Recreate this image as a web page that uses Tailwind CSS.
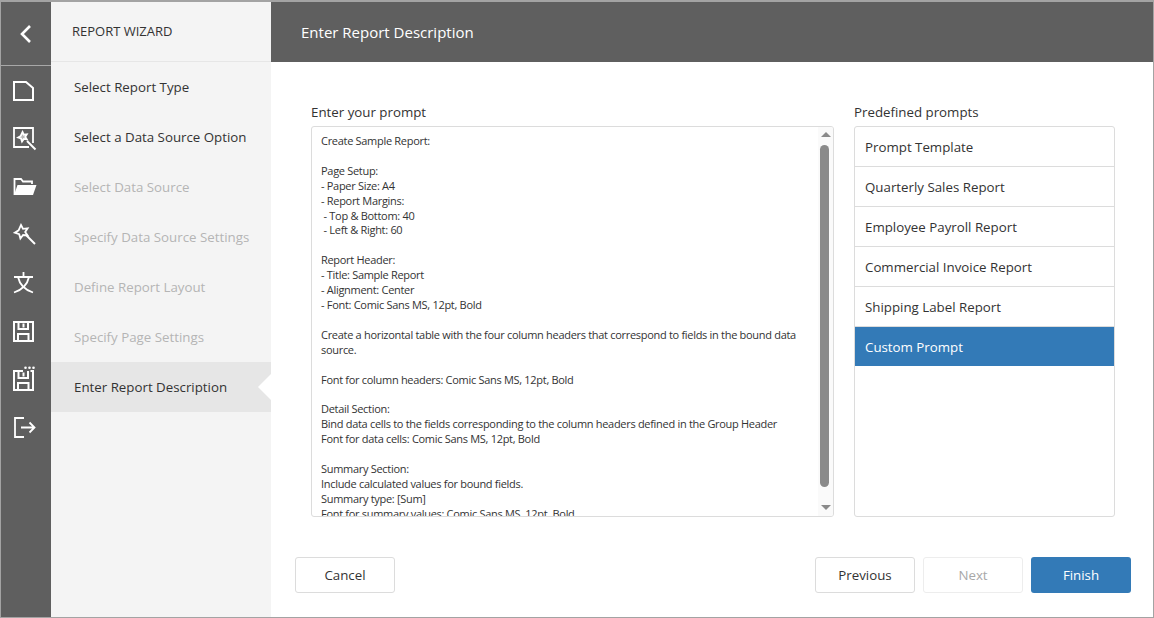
<!DOCTYPE html>
<html lang="en">

<head>
    <title>Report Wizard</title>
    <meta charset="UTF-8">
    <meta name="viewport" content="width=device-width, initial-scale=1.0">
    <script src="https://cdn.jsdelivr.net/npm/@tailwindcss/browser@4"></script>
</head>

<body class="bg-white font-['Open_Sans','Noto_Sans',sans-serif] text-[#333]">
    <div class="flex h-[618px] w-[1154px] overflow-hidden border border-t-2 border-[#a3a3a3] bg-white">
        <!-- icon bar -->
        <nav class="flex w-[50px] flex-none flex-col bg-[#5f5f5f] text-white">
            <div class="flex h-[64px] flex-none items-center justify-center border-b border-[#a8a8a8]">
                <svg width="14" height="20" viewBox="0 0 14 20" fill="none" stroke="white" stroke-width="2.6"><path d="M11 2 3 10l8 8" /></svg>
            </div>
            <div class="flex flex-col pt-[1px]">
                <div class="flex h-[48px] items-center pl-[12px]">
                    <svg width="21" height="20" viewBox="0 0 21 20" fill="none" stroke="white" stroke-width="2"><path d="M1 1h12l7 6v12H1z" /></svg>
                </div>
                <div class="flex h-[48px] items-center pl-[12px]">
                    <svg width="24" height="24" viewBox="0 0 24 24" fill="none" stroke="white" stroke-width="1.800"><path d="M16 20H1V1h19v15" /><path d="m9.500 5 1.300 2.700 3-.3-1.500 2.500 1.500 2.400-3-.4-1.800 2.600-1-3-2.900-1 2.600-1.600z" fill="white" fill-opacity=".55" /><path d="m14 14 8.500 8.500" stroke-width="2" /></svg>
                </div>
                <div class="flex h-[48px] items-center pl-[12px]">
                    <svg width="24" height="18" viewBox="0 0 24 18" fill="none" stroke="white" stroke-width="1.800"><path d="M1.500 17V1h6.500l2 2.500h9V6" /><path d="M4.500 7H23.500L20 17H1z" fill="white" stroke="none" /></svg>
                </div>
                <div class="flex h-[48px] items-center pl-[12px]">
                    <svg width="24" height="24" viewBox="0 0 24 24" fill="none" stroke="white" stroke-width="1.800"><path d="m8 2 2 3.800 4.600-.5-2.400 3.700 2.400 3.500-4.500-.5-2.700 3.500-1.200-4.300-4.400-1.500 3.800-2.400z" /><path d="m13 12 9 9" stroke-width="2" /></svg>
                </div>
                <div class="flex h-[48px] items-center pl-[12px]">
                    <svg width="22" height="22" viewBox="0 0 22 22" fill="none" stroke="white" stroke-width="1.800"><path d="M1 5h19M10.500 0v5M5 5c1.500 7 6 12.500 15 15.500M16 5C14.500 12 10 17.500 1 20.500" /></svg>
                </div>
                <div class="flex h-[48px] items-center pl-[12px]">
                    <svg width="21" height="21" viewBox="0 0 21 21" fill="none" stroke="white" stroke-width="2"><path d="M1 1h19v19H1zM5.500 1v7h9.500V1M10.500 2.500v4M5 20v-7h10.500v7" /></svg>
                </div>
                <div class="flex h-[48px] items-center pl-[12px]">
                    <svg width="23" height="26" viewBox="0 0 23 26" fill="none" stroke="white" stroke-width="2"><path d="M10 5H1v19h19V5h-2.500M5.500 5v7h9.500V5M10.500 6.500v4M5 24v-7h10.500v7" /><circle cx="12.500" cy="1.700" r="1.300" fill="white" stroke="none" /><circle cx="16.500" cy="1.700" r="1.300" fill="white" stroke="none" /><circle cx="20.500" cy="1.700" r="1.300" fill="white" stroke="none" /></svg>
                </div>
                <div class="flex h-[48px] items-center pl-[13px]">
                    <svg width="22" height="21" viewBox="0 0 22 21" fill="none" stroke="white" stroke-width="1.800"><path d="M10 1H1v19h9M7 10.500h13.500M15.500 5.500l5 5-5 5" /></svg>
                </div>
            </div>
        </nav>

        <!-- steps -->
        <aside class="flex w-[220px] flex-none flex-col bg-[#f4f4f4] text-[13.300px]">
            <div class="flex h-[60px] flex-none items-center border-b border-[#e6e6e6] pt-[1px] pl-[21px] text-[13px] font-medium">REPORT WIZARD</div>
            <ul>
                <li class="flex h-[50px] items-center pt-[2px] pl-[23px]">Select Report Type</li>
                <li class="flex h-[50px] items-center pt-[2px] pl-[23px]">Select a Data Source Option</li>
                <li class="flex h-[50px] items-center pt-[2px] pl-[23px] text-[#b5b5b5]">Select Data Source</li>
                <li class="flex h-[50px] items-center pt-[2px] pl-[23px] text-[#b5b5b5]">Specify Data Source Settings</li>
                <li class="flex h-[50px] items-center pt-[2px] pl-[23px] text-[#b5b5b5]">Define Report Layout</li>
                <li class="flex h-[50px] items-center pt-[2px] pl-[23px] text-[#b5b5b5]">Specify Page Settings</li>
                <li class="relative flex h-[50px] items-center bg-[#e6e6e6] pt-[2px] pl-[23px]">Enter Report Description
                    <span class="absolute top-[12px] right-0 h-0 w-0 border-y-[13px] border-r-[13px] border-y-transparent border-r-white"></span>
                </li>
            </ul>
        </aside>

        <!-- main -->
        <main class="flex min-w-0 flex-1 flex-col">
            <header class="flex h-[60px] flex-none items-center bg-[#5f5f5f] pl-[30px] text-[15px] text-white">Enter Report Description</header>
            <div class="flex flex-1 flex-col pr-[22px] pl-[24px]">
                <div class="flex flex-none gap-[20px] pt-[40px] pl-[16px]">
                    <section class="w-[523px]">
                        <h2 class="mb-[4px] h-[20px] text-[13.300px] leading-[20px]">Enter your prompt</h2>
                        <div class="relative h-[391px] overflow-hidden rounded-[3px] border border-[#dcdcdc]">
                            <div class="px-[9px] pt-[7px] pr-[30px] text-[11px] leading-[14.900px] tracking-[-0.3px] whitespace-pre-wrap">Create Sample Report:

Page Setup:
- Paper Size: A4
- Report Margins:
 - Top &amp; Bottom: 40
 - Left &amp; Right: 60

Report Header:
- Title: Sample Report
- Alignment: Center
- Font: Comic Sans MS, 12pt, Bold

Create a horizontal table with the four column headers that correspond to fields in the bound data source.

Font for column headers: Comic Sans MS, 12pt, Bold

Detail Section:
Bind data cells to the fields corresponding to the column headers defined in the Group Header
Font for data cells: Comic Sans MS, 12pt, Bold

Summary Section:
Include calculated values for bound fields.
Summary type: [Sum]
Font for summary values: Comic Sans MS, 12pt, Bold</div>
                            <div class="absolute top-0 right-0 bottom-0 w-[15px] bg-[#fafafa]">
                                <span class="absolute top-[5px] left-[3px] h-0 w-0 border-x-[5px] border-b-[5px] border-x-transparent border-b-[#8a8a8a]"></span>
                                <div class="absolute top-[18px] left-[2px] h-[342px] w-[9px] rounded-full bg-[#8a8a8a]"></div>
                                <span class="absolute bottom-[6px] left-[3px] h-0 w-0 border-x-[5px] border-t-[5px] border-x-transparent border-t-[#8a8a8a]"></span>
                            </div>
                        </div>
                    </section>
                    <section class="w-[261px]">
                        <h2 class="mb-[4px] h-[20px] text-[13.300px] leading-[20px]">Predefined prompts</h2>
                        <ul class="h-[391px] overflow-hidden rounded-[3px] border border-[#dcdcdc] text-[13.300px]">
                            <li class="flex h-[40px] items-center border-b border-[#dcdcdc] pt-[2px] pl-[10px]">Prompt Template</li>
                            <li class="flex h-[40px] items-center border-b border-[#dcdcdc] pt-[2px] pl-[10px]">Quarterly Sales Report</li>
                            <li class="flex h-[40px] items-center border-b border-[#dcdcdc] pt-[2px] pl-[10px]">Employee Payroll Report</li>
                            <li class="flex h-[40px] items-center border-b border-[#dcdcdc] pt-[2px] pl-[10px]">Commercial Invoice Report</li>
                            <li class="flex h-[40px] items-center border-b border-[#dcdcdc] pt-[2px] pl-[10px]">Shipping Label Report</li>
                            <li class="flex h-[39px] items-center bg-[#337ab7] pt-[2px] pl-[10px] text-white">Custom Prompt</li>
                        </ul>
                    </section>
                </div>
                <div class="mt-[40px] flex gap-[8px] text-[13.300px]">
                    <button class="mr-auto h-[36px] w-[100px] rounded-[3px] border border-[#dcdcdc] bg-white pt-[2px]">Cancel</button>
                    <button class="h-[36px] w-[100px] rounded-[3px] border border-[#dcdcdc] bg-white pt-[2px]">Previous</button>
                    <button class="h-[36px] w-[100px] rounded-[3px] border border-[#ededed] bg-white pt-[2px] text-[#a8a8a8]">Next</button>
                    <button class="h-[36px] w-[100px] rounded-[3px] bg-[#337ab7] pt-[2px] text-white">Finish</button>
                </div>
            </div>
        </main>
    </div>
</body>

</html>
